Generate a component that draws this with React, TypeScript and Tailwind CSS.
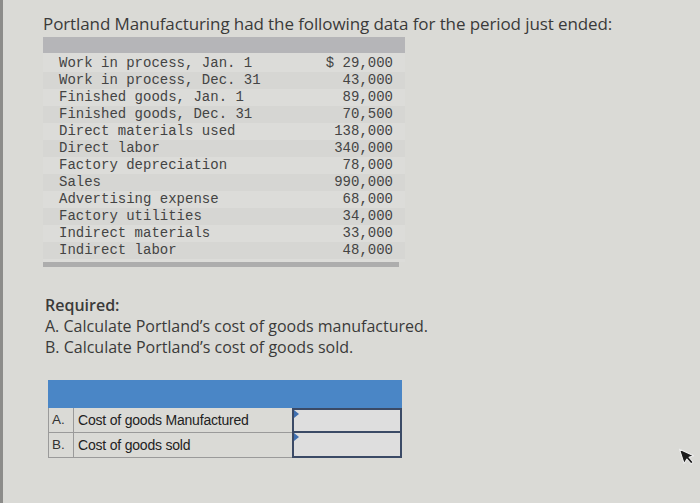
import React from "react";

const rows: [string, string][] = [
  ["Work in process, Jan. 1", "$ 29,000"],
  ["Work in process, Dec. 31", "43,000"],
  ["Finished goods, Jan. 1", "89,000"],
  ["Finished goods, Dec. 31", "70,500"],
  ["Direct materials used", "138,000"],
  ["Direct labor", "340,000"],
  ["Factory depreciation", "78,000"],
  ["Sales", "990,000"],
  ["Advertising expense", "68,000"],
  ["Factory utilities", "34,000"],
  ["Indirect materials", "33,000"],
  ["Indirect labor", "48,000"],
];

const answers = [
  ["A.", "Cost of goods Manufactured"],
  ["B.", "Cost of goods sold"],
];

const App = () => {
  return (
    <div className="relative w-[700px] h-[503px] overflow-hidden bg-[#dadad6] flex">
      {/* dark left edge of the photographed screen */}
      <div className="w-[3px] h-full bg-[#8c8c8a]"></div>

      <div className="flex-1 pl-[40px] pt-[13px] text-[#333] font-['Open_Sans',sans-serif]">
        <h1 className="text-[17px] leading-[22px] tracking-[-0.1px] text-[#3a3a3a]">
          Portland Manufacturing had the following data for the period just ended:
        </h1>

        {/* data table */}
        <div className="mt-[2px] w-[362px]">
          <div className="h-[16px] bg-[#b5b5b8]"></div>
          <div className="bg-[#dcdcd9] pt-[2px] pb-[3px]">
            {rows.map(([label, value], i) => (
              <div
                key={i}
                className={`flex justify-between pl-[16px] pr-[12px] h-[17px] items-center font-['Liberation_Mono',monospace] text-[14px] text-[#444] ${
                  i % 2 === 1 ? "bg-[#d6d6d3]" : ""
                }`}
              >
                <span>{label}</span>
                <span>{value}</span>
              </div>
            ))}
          </div>
          <div className="h-[5px] w-[356px] bg-[#adadad]"></div>
        </div>

        {/* required */}
        <div className="mt-[28px] pl-[2px] text-[16px] leading-[21px] text-[#3a3a3a]">
          <div className="font-semibold">Required:</div>
          <div>A. Calculate Portland’s cost of goods manufactured.</div>
          <div>B. Calculate Portland’s cost of goods sold.</div>
        </div>

        {/* answer table */}
        <div className="mt-[22px] ml-[5px] w-[354px] font-['Liberation_Sans',sans-serif]">
          <div className="h-[28px] bg-[#4a86c6]"></div>
          {answers.map(([letter, text], i) => (
            <div key={i} className="flex h-[25px]">
              <div className="w-[25px] border-l border-b border-[#9a9a9a] flex items-center pl-[3px] text-[13.5px] text-[#333]">
                {letter}
              </div>
              <div className="w-[219px] border-l border-b border-[#9a9a9a] flex items-center pl-[4px] text-[14px] tracking-[-0.2px] text-[#222]">
                {text}
              </div>
              <div
                className={`relative flex-1 border-2 border-[#3b4a66] bg-[#dedede] ${
                  i === 1 ? "border-t-0" : ""
                }`}
              >
                <div className="absolute left-0 top-0 w-0 h-0 border-t-[4px] border-b-[4px] border-l-[5px] border-t-transparent border-b-transparent border-l-[#3f6fb0]"></div>
              </div>
            </div>
          ))}
        </div>
      </div>

      {/* mouse pointer */}
      <svg
        className="absolute left-[678px] top-[444px]"
        width="20"
        height="24"
        viewBox="0 0 20 24"
      >
        <path
          d="M4 3 L4 18 L8 14.5 L10.5 20.5 L13 19.5 L10.5 13.5 L15.5 13.5 Z"
          transform="rotate(-18 10 12)"
          fill="#1c1c1c"
          stroke="#f2f2f2"
          strokeWidth="1"
          strokeLinejoin="round"
        />
      </svg>
    </div>
  );
};

export default App;
